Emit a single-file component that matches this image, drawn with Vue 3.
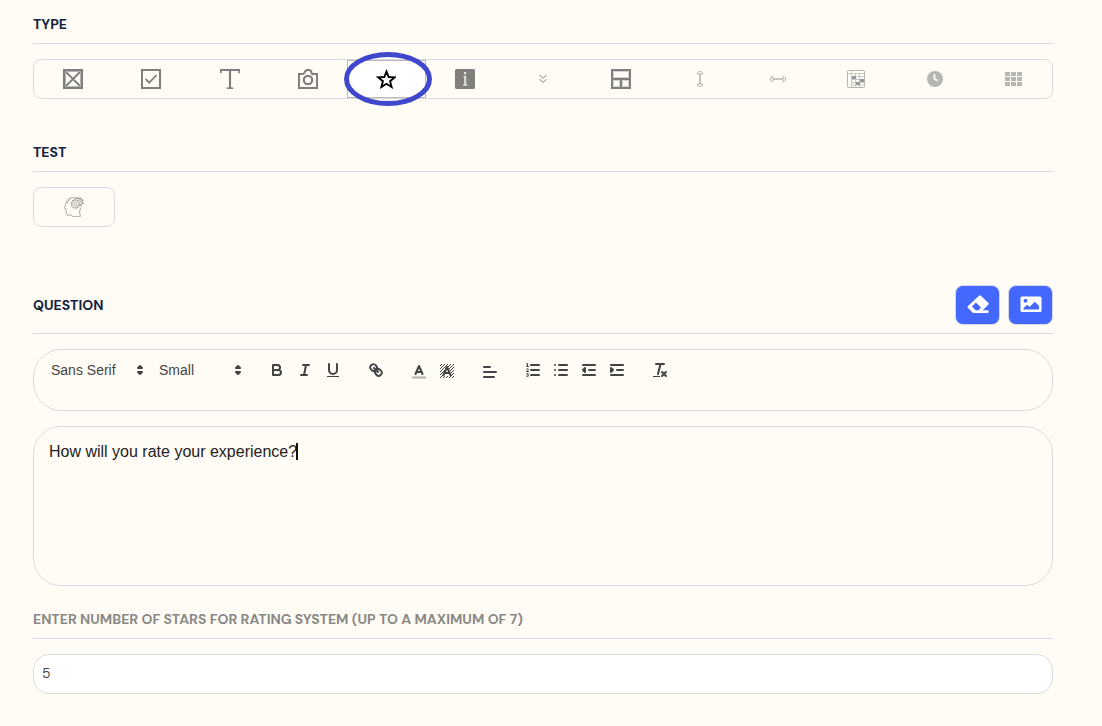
<script setup>
import { ref } from 'vue'

const types = [
  { id: 'single', label: 'Single choice' },
  { id: 'multiple', label: 'Multiple choice' },
  { id: 'text', label: 'Text' },
  { id: 'photo', label: 'Photo' },
  { id: 'stars', label: 'Star rating' },
  { id: 'info', label: 'Information' },
  { id: 'dropdown', label: 'Dropdown' },
  { id: 'layout', label: 'Layout' },
  { id: 'vertical', label: 'Vertical scale' },
  { id: 'horizontal', label: 'Horizontal scale' },
  { id: 'matrix', label: 'Matrix' },
  { id: 'time', label: 'Time' },
  { id: 'grid', label: 'Grid' }
]
const selected = ref('stars')
const font = ref('Sans Serif')
const size = ref('Small')
const question = ref('How will you rate your experience?')
const stars = ref('5')
</script>

<template>
  <main class="page">
    <section class="block">
      <h2 class="heading">TYPE</h2>
      <div class="types">
        <button
          v-for="t in types"
          :key="t.id"
          type="button"
          class="type"
          :class="{ active: selected === t.id }"
          :aria-label="t.label"
          :aria-pressed="selected === t.id"
          @click="selected = t.id"
        >
          <svg class="icon" viewBox="0 0 20 20" aria-hidden="true">
            <g v-if="t.id === 'single'" fill="none" stroke="#807f7b" stroke-width="2">
              <path d="M1 1h18v18H1z" />
              <path d="M2 2l16 16M18 2L2 18" stroke-width="1.8" />
              <path d="M2.500 2.500h15v15h-15z" stroke="#b5b4b0" stroke-width="1" />
            </g>
            <g v-else-if="t.id === 'multiple'" fill="none" stroke="#807f7b" stroke-width="2">
              <path d="M1 1h18v18H1z" />
              <path d="M4.500 9.800l3.800 3.800 7.200-7.600" stroke-width="1.800" />
            </g>
            <g v-else-if="t.id === 'text'" fill="none" stroke="#807f7b">
              <path d="M.8 4.200V1h18.400v3.200" stroke-width="1.800" />
              <path d="M10 1v18" stroke-width="2.200" />
              <path d="M6.800 19.200h6.400" stroke-width="1.600" />
            </g>
            <g v-else-if="t.id === 'photo'" fill="none" stroke="#807f7b" stroke-width="2">
              <path d="M1 19V5h3.500q1.500 0 2-1.500T9 1h2q2 0 2.500 2.500t2 1.500H19v14z" />
              <circle cx="10" cy="11" r="4.200" stroke-width="2.200" />
            </g>
            <path
              v-else-if="t.id === 'stars'"
              d="M10.500 2.500l2.200 5.500 6 .4-4.600 3.800 1.500 5.800-5.100-3.200L5.400 18l1.500-5.800-4.600-3.800 6-.4z"
              fill="none"
              stroke="#000"
              stroke-width="1.900"
            />
            <g v-else-if="t.id === 'info'">
              <rect width="20" height="20" rx="1.500" fill="#807f7b" />
              <path d="M9 3h2.200v2.200H9zM8.300 6.800h2.900V15.500h1.300v1.200H8v-1.200h1.200V8h-.9z" fill="#e4e3df" />
            </g>
            <path
              v-else-if="t.id === 'dropdown'"
              d="M6.500 6l3.500 3.300L13.500 6M6.500 10.200l3.500 3.300 3.500-3.300"
              fill="none"
              stroke="#b3b2ad"
              stroke-width="1.200"
            />
            <g v-else-if="t.id === 'layout'" fill="none" stroke="#807f7b" stroke-width="2">
              <path d="M2.500 2.500h15v6h-15zM2.500 11.500h6v6h-6zM11.500 11.500h6v6h-6z" stroke="#d0cfcb" stroke-width="1" />
              <path d="M1 1h18v18H1zM1 10h18M10 10v9" />
            </g>
            <g v-else-if="t.id === 'vertical' || t.id === 'horizontal'" fill="none" stroke="#b7b6b1" stroke-width="1">
              <g :transform="t.id === 'horizontal' ? 'rotate(90 10 10)' : undefined">
                <path d="M10 5v10" stroke-width="1.600" />
                <path d="M7.300 5C7.500 3.500 8.500 2.500 10 2.500s2.500 1 2.700 2.500zM7.300 15c.2 1.500 1.200 2.500 2.700 2.500s2.500-1 2.700-2.500z" />
              </g>
            </g>
            <g v-else-if="t.id === 'matrix'">
              <path d="M5.500 1.500v17M9.500 4.500v14M13.500 4.500v14M1.500 4.500h17M5 7.500h13M5 10.500h13M5 13.500h13M5 16h13" fill="none" stroke="#c8c8c4" />
              <rect x="1.500" y="1.500" width="17" height="17" rx="1" fill="none" stroke="#b7b6b1" />
              <path d="M6 7h4v3H6zM14 10h4v3h-4zM10 13h4v3h-4z" fill="#96979a" />
            </g>
            <g v-else-if="t.id === 'time'">
              <circle cx="10" cy="10" r="8" fill="#b7b6b1" />
              <path d="M9.500 5v5l3 1.800" fill="none" stroke="#fffcf5" stroke-width="1.800" />
            </g>
            <path
              v-else
              d="M2 3h5v4H2zM8 3h5v4H8zM14 3h5v4h-5zM2 8h5v4H2zM8 8h5v4H8zM14 8h5v4h-5zM2 13h5v4H2zM8 13h5v4H8zM14 13h5v4h-5z"
              fill="#b7b6b1"
            />
          </svg>
          <svg v-if="selected === t.id" class="ring" viewBox="0 0 88 54" aria-hidden="true">
            <ellipse cx="44" cy="27" rx="41.500" ry="24.500" fill="none" stroke="#3f48cc" stroke-width="5" />
          </svg>
        </button>
      </div>
    </section>

    <section class="block test">
      <h2 class="heading">TEST</h2>
      <button type="button" class="test-button" aria-label="Psychological test">
        <svg class="icon" viewBox="0 0 20 20" fill="none" stroke="#a09f9b" stroke-width=".9" aria-hidden="true">
          <path d="M11 1C9.500.5 7.500.4 6 1.200 3.500 2.200 2 4 2.100 6.500L.5 10.500l.3 1 1.300.3-.3 1.800.7.600-.4 1 .7 2.500 1 .7 3.500-.6 1 1.700v.2h8" />
          <path d="M16.500 19.500c-.8-2.500-1-4.300-.6-6.500l.8-2.500M3.500 6.500C3.700 4.500 4.700 3 6.700 2.200" />
          <circle cx="11.500" cy="7" r="3.900" stroke-width="1.600" stroke-dasharray="1.700 .7" />
          <circle cx="11.500" cy="7" r="1.700" />
          <path d="M10.500 2l3-1.200 1.300.8 1.700-.6.6 1.600 1.700.6-.5 1.500.8 1.500-1.600.6-.5 1.500-1.500.2" stroke-width="1.300" />
          <path d="M14 3.200c1.500-1 3.200.2 2.500 2.300" />
        </svg>
      </button>
    </section>

    <section class="block question">
      <div class="question-head">
        <h2>QUESTION</h2>
        <div class="actions">
          <button type="button" class="action" aria-label="Erase">
            <svg viewBox="0 0 22 22" aria-hidden="true">
              <path fill="#fff" fill-rule="evenodd" d="M12 1.700Q13 .8 14 1.700l7.200 7.100q1 1 0 2L15.700 16.300H20.500q1.300 0 1.300 1.300T20.500 19H7q-1 0-1.700-.7L1 14q-1-1 0-2zM8.800 8.500L5 12.600 8.600 16.300h3.200l2-3z" />
            </svg>
          </button>
          <button type="button" class="action" aria-label="Insert image">
            <svg viewBox="0 0 22 22" aria-hidden="true">
              <path fill="#fff" fill-rule="evenodd" d="M2 2.500h18q1.500 0 1.500 1.500v12.500Q21.500 18 20 18H2Q.5 18 .5 16.500V4Q.5 2.500 2 2.500zM5.500 4.800a2 2 0 1 0 0 4 2 2 0 0 0 0-4zM3.500 15.500h15.500V12l-4.200-4.200-5.300 5.300-2.300-2.300-3.700 3.200z" />
            </svg>
          </button>
        </div>
      </div>

      <div class="toolbar" role="toolbar" aria-label="Formatting">
        <div class="group">
          <span class="picker font">
            <select v-model="font" aria-label="Font">
              <option>Sans Serif</option>
              <option>Serif</option>
              <option>Monospace</option>
            </select>
            <svg viewBox="0 0 18 18" aria-hidden="true"><path d="M7 11l2 2 2-2zM7 7l2-2 2 2z" /></svg>
          </span>
          <span class="picker size">
            <select v-model="size" aria-label="Size">
              <option>Small</option>
              <option>Normal</option>
              <option>Large</option>
            </select>
            <svg viewBox="0 0 18 18" aria-hidden="true"><path d="M7 11l2 2 2-2zM7 7l2-2 2 2z" /></svg>
          </span>
        </div>
        <div class="group">
          <button type="button" aria-label="Bold">
            <svg viewBox="0 0 18 18"><path d="M5 4h4.500a2.500 2.500 0 0 1 0 5H5zM5 9h5.500a2.500 2.500 0 0 1 0 5H5z" /></svg>
          </button>
          <button type="button" aria-label="Italic">
            <svg viewBox="0 0 18 18"><path d="M7 4h6M5 14h6M8 14l2-10" /></svg>
          </button>
          <button type="button" aria-label="Underline">
            <svg viewBox="0 0 18 18"><path d="M5 3v6a4 4 0 0 0 8 0V3" /><path class="solid" d="M3 15h12v1H3z" /></svg>
          </button>
        </div>
        <div class="group">
          <button type="button" aria-label="Link">
            <svg viewBox="0 0 18 18">
              <path d="M7 7l4 4" />
              <path d="M8.900 4.577a3.476 3.476 0 0 1 .36 4.679A3.476 3.476 0 0 1 4.577 8.900C3.185 7.500 2.035 6.400 4.217 4.217S7.500 3.185 8.900 4.577z" />
              <path d="M13.423 9.100a3.476 3.476 0 0 0-4.679-.36 3.476 3.476 0 0 0 .36 4.679c1.392 1.392 2.500 2.542 4.679.36s1.032-3.279-.36-4.679z" />
            </svg>
          </button>
        </div>
        <div class="group low">
          <button type="button" aria-label="Text colour">
            <svg viewBox="0 0 18 18"><path class="faint" d="M2 15.500h14" /><path d="M5.500 12L9 4l3.500 8M11.600 10H6.400" /></svg>
          </button>
          <button type="button" aria-label="Background colour">
            <svg viewBox="0 0 18 18">
              <path
                class="hatch"
                d="M2 4l2-2M2 7l5-5M2 10l8-8M2 13L13 2M2 16L16 2M5 16L16 5M8 16l8-8M11 16l5-5M14 16l2-2"
              />
              <path class="clear" d="M9 4l-4 10h8z" />
              <path d="M5.500 13L9 5l3.500 8M11.600 11H6.400" />
            </svg>
          </button>
        </div>
        <div class="group low">
          <button type="button" aria-label="Align">
            <svg viewBox="0 0 18 18"><path d="M3 10h12M3 15h10M3 5h6" /></svg>
          </button>
        </div>
        <div class="group">
          <button type="button" aria-label="Numbered list">
            <svg viewBox="0 0 18 18">
              <path d="M7 4h8M7 9h8M7 14h8" />
              <path class="thin" d="M2.500 5.500h2M3.500 5.500v-3l-1 .5M4.500 10.500h-2c0-1 1.850-1.300 1.850-2.200 0-1-1.600-1-1.850-.2M2.500 12.600c.5-.4 1.900-.3 1.900.5 0 .6-.4.800-1 .8.600 0 1.100.3 1.100.9 0 .9-1.500 1-2 .4" />
            </svg>
          </button>
          <button type="button" aria-label="Bulleted list">
            <svg viewBox="0 0 18 18"><path d="M7 4h8M7 9h8M7 14h8M3 4h.010M3 9h.010M3 14h.010" /></svg>
          </button>
          <button type="button" aria-label="Decrease indent">
            <svg viewBox="0 0 18 18"><path d="M3 14h12M3 4h12M9 9h6" /><path class="solid joined" d="M5 7v4L3 9z" /></svg>
          </button>
          <button type="button" aria-label="Increase indent">
            <svg viewBox="0 0 18 18"><path d="M3 14h12M3 4h12M9 9h6" /><path class="solid joined" d="M3 7v4l2-2z" /></svg>
          </button>
        </div>
        <div class="group">
          <button type="button" aria-label="Clear formatting">
            <svg viewBox="0 0 18 18">
              <path d="M5 3h8M9.500 3L7 13M11 11l4 4M15 11l-4 4" />
              <path class="solid" d="M2 15h7v1H2z" />
            </svg>
          </button>
        </div>
      </div>

      <div class="editor">
        <textarea v-model="question" aria-label="Question"></textarea>
        <span class="caret" aria-hidden="true"></span>
      </div>
    </section>

    <section class="block">
      <label class="heading muted" for="star-count">ENTER NUMBER OF STARS FOR RATING SYSTEM (UP TO A MAXIMUM OF 7)</label>
      <input id="star-count" v-model="stars" class="count" type="text" inputmode="numeric" />
    </section>
  </main>
</template>

<style>
body {
  background: #fffcf5;
}
</style>

<style scoped>
* {
  box-sizing: border-box;
}
.page {
  padding: 14px 49px 32px 33px;
  font-family: "DM Sans", Inter, "Liberation Sans", sans-serif;
  color: #12233f;
}
button {
  padding: 0;
  border: 0;
  background: none;
  cursor: pointer;
}
svg {
  display: block;
}
h2,
.heading {
  margin: 0;
  font-size: 14px;
  line-height: 20px;
  font-weight: 700;
  font-variation-settings: "opsz" 9;
}
.heading {
  display: block;
  padding-bottom: 9px;
  border-bottom: 1px solid #dadbdd;
  margin-bottom: 15px;
}
.muted {
  color: #8a8986;
}
.types {
  display: grid;
  grid-template-columns: repeat(13, 1fr);
  height: 40px;
  border: 1px solid #dadbdd;
  border-radius: 8px;
}
.type {
  position: relative;
  display: flex;
  align-items: center;
  justify-content: center;
}
.type.active {
  background: #fff;
  border: 1px solid #b9b9b9;
}
.icon {
  width: 20px;
  height: 20px;
}
.ring {
  position: absolute;
  left: -4px;
  top: -9px;
  width: 88px;
  height: 54px;
}
.test {
  margin-top: 43px;
}
.test-button {
  display: flex;
  align-items: center;
  justify-content: center;
  width: 82px;
  height: 40px;
  border: 1px solid #dadbdd;
  border-radius: 8px;
}
.question {
  margin-top: 58px;
  margin-bottom: 23px;
}
.question-head {
  display: flex;
  align-items: center;
  justify-content: space-between;
  padding-bottom: 8px;
  border-bottom: 1px solid #dadbdd;
  margin-bottom: 15px;
}
.actions {
  display: flex;
  gap: 8px;
}
.action {
  display: flex;
  align-items: center;
  justify-content: center;
  width: 45px;
  height: 40px;
  border: 1px solid #d5d8e6;
  border-radius: 8px;
  background: #4468fd;
}
.action svg {
  width: 22px;
  height: 22px;
}
.toolbar {
  display: flex;
  flex-wrap: wrap;
  align-items: flex-start;
  min-height: 62px;
  padding: 8px;
  border: 1px solid #dadbdd;
  border-radius: 28px;
}
.group {
  display: flex;
  margin-right: 15px;
}
.group button {
  width: 28px;
  height: 24px;
  padding: 3px 5px;
}
.group.low {
  padding-top: 1px;
}
.group svg {
  width: 18px;
  height: 18px;
}
.group button path {
  fill: none;
  stroke: #444;
  stroke-width: 2;
  stroke-linecap: round;
  stroke-linejoin: round;
}
.group button .solid {
  fill: #444;
  stroke: none;
}
.group button .joined {
  stroke: #444;
}
.group button .faint {
  opacity: 0.4;
  stroke-linecap: butt;
}
.group button .thin {
  stroke-width: 1;
}
.group button .hatch {
  stroke-width: 1;
  stroke-linecap: butt;
}
.group button .clear {
  fill: #fffcf5;
  stroke: none;
}
.picker {
  position: relative;
  height: 24px;
}
.picker.font {
  width: 108px;
}
.picker.size {
  width: 98px;
}
.picker select {
  appearance: none;
  width: 100%;
  height: 24px;
  padding: 0 20px 0 9px;
  border: 0;
  background: none;
  color: #444;
  font: 500 14px/24px "Liberation Sans", Arial, sans-serif;
}
.picker svg {
  position: absolute;
  top: 3px;
  right: 1px;
  fill: #444;
  stroke: #444;
  stroke-width: 2;
  stroke-linejoin: round;
  pointer-events: none;
}
.editor {
  position: relative;
  margin-top: 15px;
}
.editor textarea {
  display: block;
  width: 100%;
  height: 160px;
  padding: 13px 15px;
  border: 1px solid #dadbdd;
  border-radius: 28px;
  background: none;
  color: #222;
  resize: none;
  font: 16px/24px "Liberation Sans", Arial, sans-serif;
}
.caret {
  position: absolute;
  left: 263px;
  top: 17px;
  width: 2px;
  height: 17px;
  background: #111;
}
.count {
  display: block;
  width: 100%;
  height: 40px;
  padding: 0 8px 2px;
  border: 1px solid #dadbdd;
  border-radius: 16px;
  background: #fff;
  color: #444;
  font: 14px/20px "DM Sans", Inter, sans-serif;
}
</style>
